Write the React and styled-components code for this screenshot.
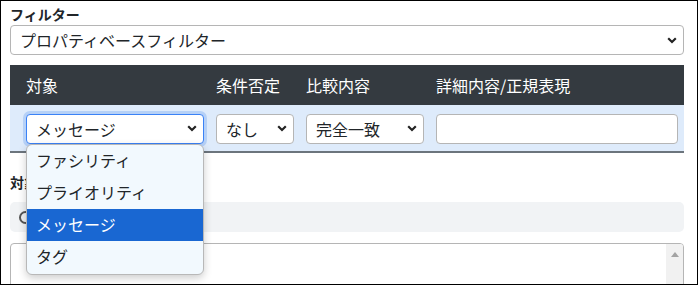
import styled, { createGlobalStyle } from "styled-components";

const Global = createGlobalStyle`
  body {
    margin: 0;
    background: #fff;
    font-family: "Noto Sans CJK JP", "Noto Sans", sans-serif;
    color: #212529;
  }
  * { box-sizing: border-box; }
`

const Frame = styled.div`
  width: 698px;
  height: 285px;
  border: 1px solid #000;
  padding: 3px 13px 0 9px;
  overflow: hidden;
`

const Label = styled.div`
  font-size: 14px;
  font-weight: bold;
  line-height: 21px;
  height: 21px;
`

const SelectBox = styled.div`
  position: relative;
  height: 30px;
  border: 1px solid ${p => (p.$focus ? "#3b82f6" : "#b5b5b5")};
  border-radius: 4px;
  background: #fff;
  display: flex;
  align-items: center;
  justify-content: space-between;
  padding: 0 6px 0 9px;
  font-size: 16px;
  width: ${p => p.$width || "100%"};
  box-shadow: ${p => (p.$focus ? "0 0 0 3px #b6d1f7" : "none")};
`

const Table = styled.div`
  margin-top: 10px;
`

const Columns = styled.div`
  display: grid;
  grid-template-columns: 178px 78px 118px 1fr;
  column-gap: 12px;
  padding: 0 6px 0 16px;
  align-items: center;
`

const HeadRow = styled(Columns)`
  height: 40px;
  background: #343a40;
  color: #fff;
  font-size: 16px;
`

const BodyRow = styled(Columns)`
  height: 48px;
  background: #deebfb;
  border-bottom: 2px solid #6c757d;
  padding-top: 1px;
`

const Cell = styled.div`
  position: relative;
`

const TextInput = styled.div`
  height: 30px;
  border: 1px solid #b5b5b5;
  border-radius: 4px;
  background: #fff;
`

const Section = styled.div`
  margin-top: 19px;
`

const GrayBar = styled.div`
  margin-top: 9px;
  height: 30px;
  background: #f1f3f5;
  border-radius: 5px;
  display: flex;
  align-items: center;
  padding-left: 9px;
`

const Radio = styled.span`
  width: 13px;
  height: 13px;
  border: 2px solid #555;
  border-radius: 50%;
`

const TextArea = styled.div`
  margin-top: 11px;
  height: 60px;
  border: 1px solid #b5b5b5;
  border-radius: 4px;
  display: flex;
  justify-content: flex-end;
  overflow: hidden;
`

const ScrollTrack = styled.div`
  width: 17px;
  background: #f1f1f1;
  display: flex;
  justify-content: center;
  padding-top: 8px;
`

const Menu = styled.div`
  position: absolute;
  top: 30px;
  left: 0;
  width: 178px;
  padding: 0 0 1px;
  background: #f2f9fe;
  border: 1px solid #b8b8b8;
  border-radius: 6px;
  box-shadow: 0 3px 8px rgba(0, 0, 0, 0.2);
  z-index: 5;
`

const Option = styled.div`
  height: 32px;
  line-height: 31px;
  padding-left: 9px;
  font-size: 16px;
  background: ${p => (p.$selected ? "#1967d2" : "transparent")};
  color: ${p => (p.$selected ? "#fff" : "#212529")};
`

function Chevron() {
  return (
    <svg width="10" height="7" viewBox="0 0 10 7">
      <path d="M1.2 1.3 L5 5 L8.8 1.3" fill="none" stroke="#222" strokeWidth="2.2" />
    </svg>
  )
}

function Select({ value, width, focus }) {
  return (
    <SelectBox $width={width} $focus={focus}>
      <span>{value}</span>
      <Chevron />
    </SelectBox>
  )
}

const options = ["ファシリティ", "プライオリティ", "メッセージ", "タグ"]

function App() {
  return (
    <Frame>
      <Global />
      <Label>フィルター</Label>
      <Select value="プロパティベースフィルター" />
      <Table>
        <HeadRow>
          <span>対象</span>
          <span>条件否定</span>
          <span>比較内容</span>
          <span>詳細内容/正規表現</span>
        </HeadRow>
        <BodyRow>
          <Cell>
            <Select value="メッセージ" focus />
            <Menu>
              {options.map(o => (
                <Option key={o} $selected={o === "メッセージ"}>{o}</Option>
              ))}
            </Menu>
          </Cell>
          <Select value="なし" />
          <Select value="完全一致" />
          <TextInput />
        </BodyRow>
      </Table>
      <Section>
        <Label>対象</Label>
        <GrayBar>
          <Radio />
        </GrayBar>
      </Section>
      <TextArea>
        <ScrollTrack>
          <svg width="8" height="5" viewBox="0 0 8 5">
            <path d="M0 5 L4 0 L8 5 Z" fill="#a3a3a3" />
          </svg>
        </ScrollTrack>
      </TextArea>
    </Frame>
  )
}

export default App
